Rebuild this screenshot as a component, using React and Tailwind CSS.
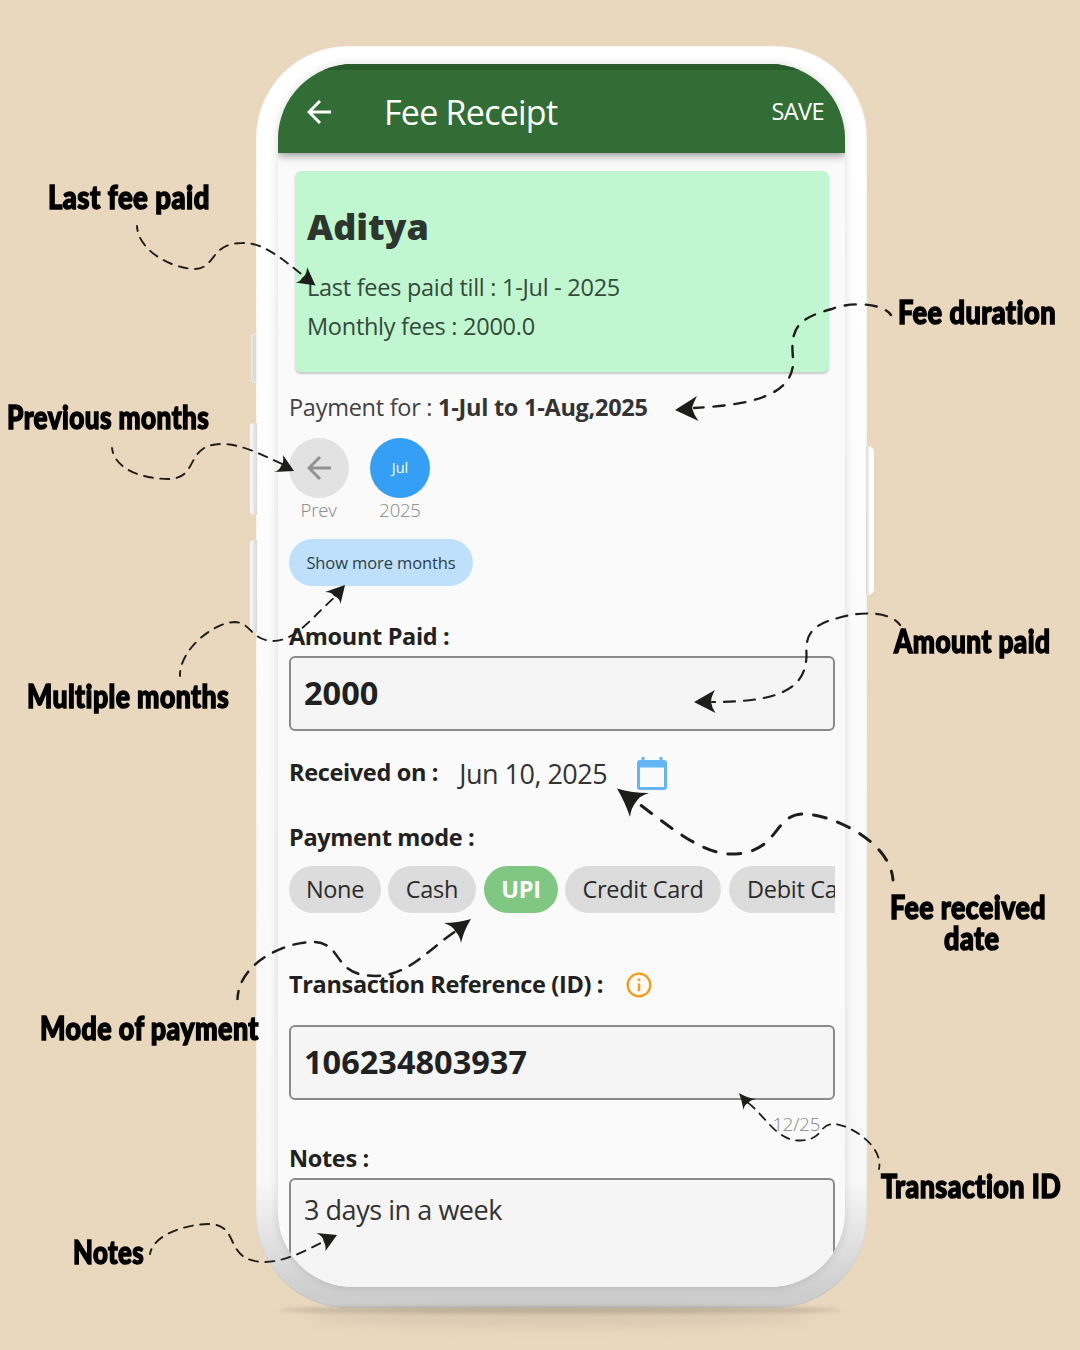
import { useLayoutEffect, useRef, useState } from "react";

const arrows = [
  { w: 1.9, dash: "9 7.4", d: "M137 226 C138 250 170 268 194 269 C216 269 210 243 242 243 C262 242 280 257 305 277", head: "M315.500 285.500 L307 267 Q307 275 302 278 Q300 282 295.500 282.500 Z" },
  { w: 1.9, dash: "9 7.4", d: "M112 448 C115 472 148 479 168 479 C200 479 184 444 222 444 C242 444 262 455 282 464", head: "M294 471 L283 455 Q284 463 281 466 Q279 471 274 472 Z" },
  { w: 1.9, dash: "9 7.4", d: "M180 676 C179 650 214 622 235 622 C252 623 250 640 273 641 C296 641 312 617 336 596", head: "M345 585 L325 592 Q332 592 334 596 Q340 598 340.500 604 Z" },
  { w: 2.4, dash: "11 10", d: "M891 315 C882 302 848 302 832 309 C798 318 790 328 793 358 C796 395 752 405 694 408", head: "M675 410 L697 396 Q693 404 692 408 Q694 415 698.500 421 Z" },
  { w: 2.2, dash: "11 9", d: "M900 625 C890 610 856 612 838 618 C806 626 806 640 806.500 655 C806 690 778 702 712 702", head: "M694 702 L715 690 Q711 697 711 702 Q712 708 715.500 713 Z" },
  { w: 3, dash: "13 12", d: "M893 880 C890 840 830 814 804 814 C772 814 780 854 731 854 C700 854 664 822 635 801", head: "M617 788.500 Q632 793 649 793 Q639 796 636 802 Q631 808 630 817 Q625 802 617 788.500 Z" },
  { w: 2.5, dash: "12 9.8", d: "M237.500 999 C239 962 286 942 312 942 C345 942 330 976 376 976 C408 976 430 948 456 931", head: "M471 919 Q457 923 444 923 Q453 926 455 931 Q460 936 461 943 Q464 930 471 919 Z" },
  { w: 1.8, dash: "8.5 7", d: "M879 1169 C884 1145 848 1124 834 1124 C818 1124 824 1140 800 1140.500 C776 1141 766 1116 747 1102", head: "M739 1093 Q747 1098 756 1099 Q750 1100 748 1103 Q744 1105 743.500 1110 Q742 1101 739 1093 Z" },
  { w: 1.9, dash: "9 7.4", d: "M150 1254 C154 1232 192 1224 208 1224 C242 1224 222 1261 264 1262 C286 1262 306 1250 325 1241", head: "M337 1235 L316.500 1233 Q323 1236 323.500 1241 Q326 1245 325.500 1251 Z" },
];

const notes = [
  { text: "Last fee paid", pos: "left-[48px] top-[182px]", w: 162 },
  { text: "Previous months", pos: "left-[7px] top-[402px]", w: 202 },
  { text: "Multiple months", pos: "left-[27px] top-[681px]", w: 202 },
  { text: "Mode of payment", pos: "left-[40px] top-[1013px]", w: 219 },
  { text: "Notes", pos: "left-[73px] top-[1237px]", w: 71 },
  { text: "Fee duration", pos: "left-[898px] top-[297px]", w: 158 },
  { text: "Amount paid", pos: "left-[894px] top-[626px]", w: 156 },
  { text: "Fee received", pos: "left-[890px] top-[892px]", w: 156 },
  { text: "date", pos: "left-[944px] top-[923px]", w: 56 },
  { text: "Transaction ID", pos: "left-[881px] top-[1171px]", w: 180 },
];

function Note({ text, pos, w }) {
  const ref = useRef(null);
  const [scale, setScale] = useState(1);
  useLayoutEffect(() => {
    setScale(w / ref.current.offsetWidth);
  }, [w]);
  return (
    <span
      ref={ref}
      style={{ transform: `scaleX(${scale})` }}
      className={`absolute origin-left whitespace-nowrap font-['Lato'] text-[32px] leading-[30px] font-black tracking-[0.5px] text-black [font-variant-ligatures:none] [-webkit-text-stroke:1.5px_black] [stroke-linejoin:round] ${pos}`}
    >
      {text}
    </span>
  );
}

function BackArrow({ className }) {
  return (
    <svg viewBox="0 0 24 24" className={className} fill="none" stroke="currentColor" strokeWidth="2.900">
      <path d="M24 12H2.500M13 1L2 12l11 11" />
    </svg>
  );
}

function Chip({ children, className }) {
  return (
    <div className={`flex h-[47px] shrink-0 items-center justify-center rounded-full text-[23.500px] tracking-[-0.3px] whitespace-nowrap ${className}`}>
      {children}
    </div>
  );
}

function Label({ children }) {
  return <span className="text-[23.500px] leading-8 font-bold tracking-[-0.34px] text-[#212121]">{children}</span>;
}

function Field({ children, className }) {
  return (
    <div className={`flex w-[546px] rounded-md border-2 border-[#8a8a8a] bg-[#f5f5f5] pl-[13px] text-[#212121] ${className}`}>
      {children}
    </div>
  );
}

function Screen() {
  return (
    <div className="flex h-[1223px] w-[567px] flex-col overflow-hidden rounded-[75px] bg-[#fafafa]">
      <header className="z-10 flex h-[89px] shrink-0 items-center border-t-[6px] border-[#285a2b] bg-[#316d34] pr-[21px] pl-[29px] text-white shadow-[0_2px_9px_rgba(0,0,0,0.45)]">
        <BackArrow className="size-[24px]" />
        <h1 className="ml-[53px] pt-px text-[34px] leading-10 tracking-[-0.75px]">Fee Receipt</h1>
        <span className="ml-auto pb-[2px] text-[23.500px] leading-8 tracking-[-0.55px]">SAVE</span>
      </header>

      <section className="mt-[18px] mr-[16px] ml-[17px] flex h-[201px] shrink-0 flex-col rounded-md bg-[#c0f7d0] pl-[12px] shadow-[0_2px_2px_rgba(0,0,0,0.2)]">
        <h2 className="mt-[31px] text-[36px] leading-[50px] font-extrabold text-[#2c352e]">Aditya</h2>
        <p className="mt-[20px] text-[23.500px] leading-[30px] tracking-[-0.27px] text-[#344a3a]">Last fees paid till : 1-Jul - 2025</p>
        <p className="mt-[9px] text-[23.500px] leading-[30px] tracking-[-0.27px] text-[#344a3a]">Monthly fees : 2000.0</p>
      </section>

      <main className="flex flex-1 flex-col pl-[11px]">
        <p className="mt-[19px] h-[33px] text-[23.500px] leading-8 tracking-[-0.27px] text-[#424242]">
          Payment for : <b className="font-bold text-[#333]">1-Jul to 1-Aug,2025</b>
        </p>

        <div className="mt-[14px] flex h-[84px] gap-[22px] text-[18.500px] leading-6 font-light tracking-[-0.2px] text-[#858585]">
          <div className="flex w-[59px] flex-col items-center">
            <div className="flex size-[60px] items-center justify-center rounded-full bg-[#e2e2e2] text-[#929292]">
              <BackArrow className="size-[24px]" />
            </div>
            <span>Prev</span>
          </div>
          <div className="flex w-[60px] flex-col items-center">
            <div className="flex size-[60px] items-center justify-center rounded-full bg-[#349ff4] text-[14.500px] font-medium tracking-normal text-white">Jul</div>
            <span>2025</span>
          </div>
        </div>

        <div className="mt-[17px] flex h-[47px] w-[184px] items-center justify-center rounded-full bg-[#bfe0fb] pt-[2px] text-[16.500px] tracking-[-0.1px] text-[#2c3e4c]">
          Show more months
        </div>

        <div className="mt-[34px] flex h-[36px]"><Label>Amount Paid :</Label></div>
        <Field className="h-[75px] items-center text-[32.500px] font-bold">2000</Field>

        <div className="mt-[22px] flex h-[40px] items-center">
          <span className="pb-[2px]"><Label>Received on :</Label></span>
          <span className="ml-[21px] pt-px text-[27px] leading-9 tracking-[-0.5px] text-[#333]">Jun 10, 2025</span>
          <svg viewBox="0 0 30 33" className="ml-[30px] h-[33px] w-[30px]" fill="#64b5f6">
            <path fillRule="evenodd" d="M4.500 0h3v3h15V0h3v3H27a3 3 0 0 1 3 3v24a3 3 0 0 1-3 3H3a3 3 0 0 1-3-3V6a3 3 0 0 1 3-3h1.500zM3 10.500V30h24V10.500z" />
          </svg>
        </div>

        <div className="mt-[28px] flex h-[45px]"><Label>Payment mode :</Label></div>
        <div className="flex w-[546px] overflow-hidden text-[#2b2b2b]">
          <Chip className="w-[92px] bg-[#dcdcdc]">None</Chip>
          <Chip className="ml-[7px] w-[88px] bg-[#dcdcdc]">Cash</Chip>
          <Chip className="ml-[8px] w-[74px] bg-[#81c784] font-bold text-white">UPI</Chip>
          <Chip className="ml-[7px] w-[156px] bg-[#dcdcdc]">Credit Card</Chip>
          <Chip className="ml-[8px] w-[150px] bg-[#dcdcdc]">Debit Card</Chip>
        </div>

        <div className="mt-[55px] flex h-[57px]">
          <Label>Transaction Reference (ID) :</Label>
          <svg viewBox="0 0 26 26" className="mt-[4px] ml-[23px] size-[26px]" fill="none" stroke="#f59b15" strokeWidth="2.300">
            <circle cx="13" cy="13" r="11.300" />
            <path d="M13 11.500v7.500M13 6.500v2.500" strokeWidth="2.500" />
          </svg>
        </div>
        <Field className="h-[75px] items-center text-[32.500px] font-bold">106234803937</Field>
        <div className="mt-[12px] w-[531px] text-right text-[18.500px] leading-6 font-light tracking-[-0.2px] text-[#858585]">12/25</div>

        <div className="mt-[6px] flex h-[36px]"><Label>Notes :</Label></div>
        <Field className="h-[160px] shrink-0 pt-[12px] text-[27px] leading-[36px] tracking-[-0.45px]">
          <span className="text-[#333]">3 days in a week</span>
        </Field>
      </main>
    </div>
  );
}

export default function App() {
  return (
    <div className="relative h-[1350px] w-[1080px] overflow-hidden bg-[#e9d8be] font-['Open_Sans',sans-serif]">
      <div className="absolute top-[1307px] left-[278px] h-[6px] w-[564px] rounded-[50%] bg-[#8d8271]/50 blur-[2px]" />
      <div className="absolute top-[1308px] left-[310px] h-[20px] w-[500px] rounded-[50%] bg-[#8d8271]/15 blur-[6px]" />
      <div className="absolute top-[333px] left-[251px] h-[50px] w-[6px] rounded-l-sm border border-[#efefef] bg-[#dcdcdc]" />
      <div className="absolute top-[423px] left-[250px] h-[92px] w-[7px] rounded-l bg-gradient-to-r from-white to-[#d6d6d6]" />
      <div className="absolute top-[540px] left-[250px] h-[92px] w-[7px] rounded-l bg-gradient-to-r from-white to-[#d6d6d6]" />
      <div className="absolute top-[446px] left-[866px] h-[149px] w-[8px] rounded-r-md bg-gradient-to-l from-white via-white to-[#d6d6d6]" />

      <div className="mt-[46px] ml-[256px] h-[1262px] w-[611px] rounded-[92px] bg-gradient-to-b from-white from-5% via-[#f8f8f8] via-90% to-[#cdcdcd] to-99% pt-[18px] pl-[22px] shadow-[inset_0_0_2px_rgba(0,0,0,0.12)]">
        <div className="h-[1223px] w-[567px] rounded-[75px] shadow-[0_0_10px_rgba(0,0,0,0.14)]">
          <Screen />
        </div>
      </div>

      <svg viewBox="0 0 1080 1350" className="absolute inset-0 z-20 size-full" fill="none">
        {arrows.map((a) => (
          <g key={a.d}>
            <path d={a.d} stroke="#1d1d1b" strokeWidth={a.w} strokeDasharray={a.dash} strokeLinecap="round" strokeDashoffset="4" />
            <path d={a.head} fill="#1d1d1b" />
          </g>
        ))}
      </svg>
      {notes.map((n) => (
        <Note key={n.text} {...n} />
      ))}
    </div>
  );
}
